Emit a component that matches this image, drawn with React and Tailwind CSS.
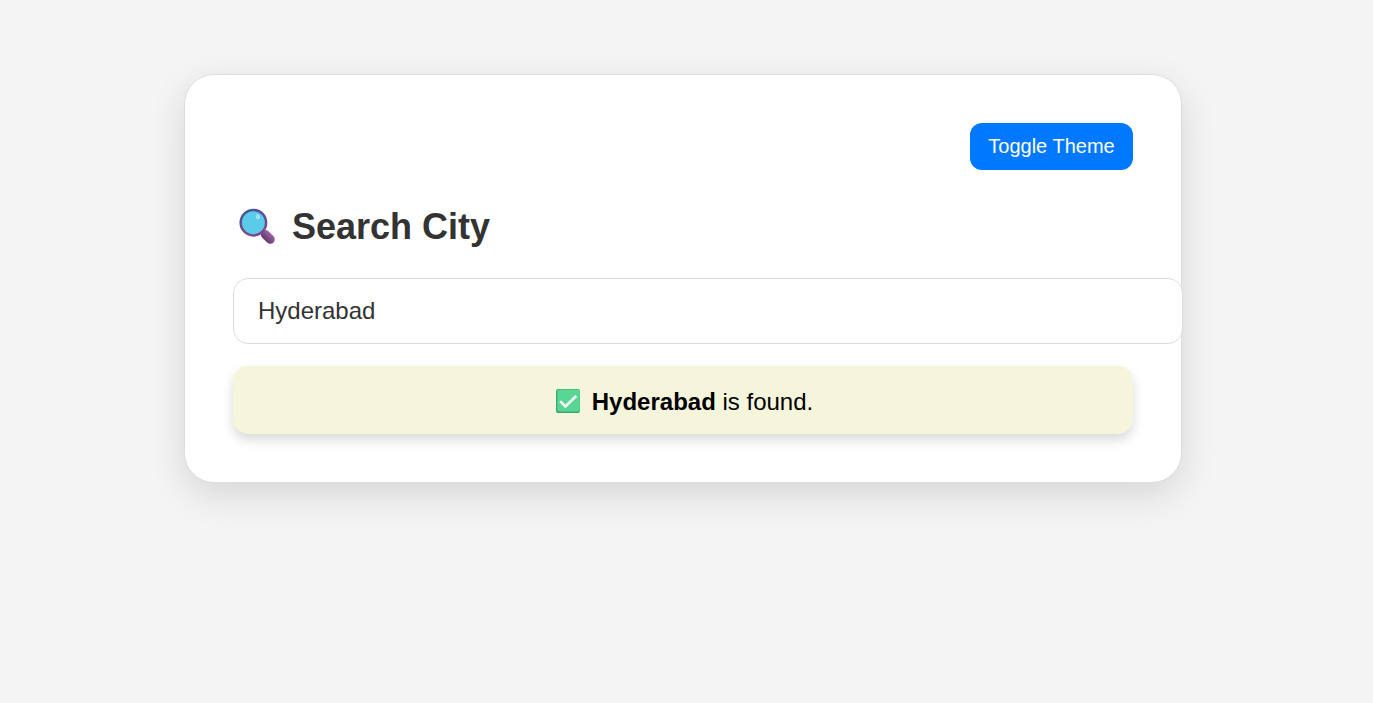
import React, { useState } from 'react';

function MagnifierIcon() {
  return (
    <svg width="36" height="36" viewBox="0 0 36 36" className="shrink-0 overflow-visible" aria-hidden="true">
      <defs>
        <linearGradient id="rim" x1="0" y1="0" x2="0.3" y2="1">
          <stop offset="0" stopColor="#43569a" />
          <stop offset="1" stopColor="#7b4a8c" />
        </linearGradient>
        <linearGradient id="handle" x1="0" y1="1" x2="1" y2="0">
          <stop offset="0" stopColor="#6b3a72" />
          <stop offset="1" stopColor="#97609f" />
        </linearGradient>
      </defs>
      <path d="M22.5 22l4 4" stroke="#6b4a86" strokeWidth="3.5" />
      <path d="M26.4 25.6l4.9 4.7" stroke="url(#handle)" strokeWidth="9" strokeLinecap="round" />
      <circle cx="14.4" cy="13.7" r="12.7" fill="#5bcbea" stroke="url(#rim)" strokeWidth="2.5" />
      <ellipse cx="18.8" cy="7.8" rx="2.1" ry="2.5" fill="#a5e0f4" transform="rotate(-30 18.8 7.8)" />
    </svg>
  );
}

function CheckIcon() {
  return (
    <svg width="24" height="24" viewBox="0 0 24 24" className="mb-px shrink-0" aria-hidden="true">
      <rect x="0" y="0" width="24" height="24" rx="2.6" fill="#3fa677" />
      <rect x="1.3" y="0.4" width="22.5" height="22" rx="2.2" fill="#59d692" />
      <path d="M4.2 12.2l5.2 5.2L20.2 7" fill="none" stroke="#fff" strokeWidth="2.5" />
    </svg>
  );
}

export default function App() {
  const [city, setCity] = useState('Hyderabad');
  return (
    <div className="min-h-screen overflow-hidden bg-[#f4f4f4] pt-[74px] font-['Liberation_Sans',Arial,sans-serif]">
      <main className="ml-[184px] flex h-[409px] w-[998px] flex-col rounded-[30px] border border-[#dddddd] bg-white p-12 shadow-[0_12px_36px_rgba(0,0,0,0.12)]">
        <button className="h-[47px] w-[163px] shrink-0 self-end rounded-[12px] bg-[#0078ff] pb-px text-[20px] leading-none text-white">
          Toggle Theme
        </button>
        <h1 className="mt-[35px] flex h-[44px] shrink-0 items-center gap-[17px] pl-[6px] text-[36px] leading-[44px] font-bold text-[#333333]">
          <MagnifierIcon />
          <span>Search City</span>
        </h1>
        <input
          className="mt-[29px] h-[66px] w-[950px] shrink-0 rounded-[15px] border border-[#dddddd] bg-white px-6 text-[24px] text-[#333333] outline-none"
          value={city}
          onChange={(e) => setCity(e.target.value)}
        />
        <div className="mt-[22px] flex h-[68px] shrink-0 items-center justify-center gap-[12px] rounded-[15px] bg-[#f5f5dc] pt-[3px] pl-[3px] text-[24px] text-black shadow-[0_6px_12px_rgba(0,0,0,0.15)]">
          <CheckIcon />
          <p>
            <strong>Hyderabad</strong> is found.
          </p>
        </div>
      </main>
    </div>
  );
}
